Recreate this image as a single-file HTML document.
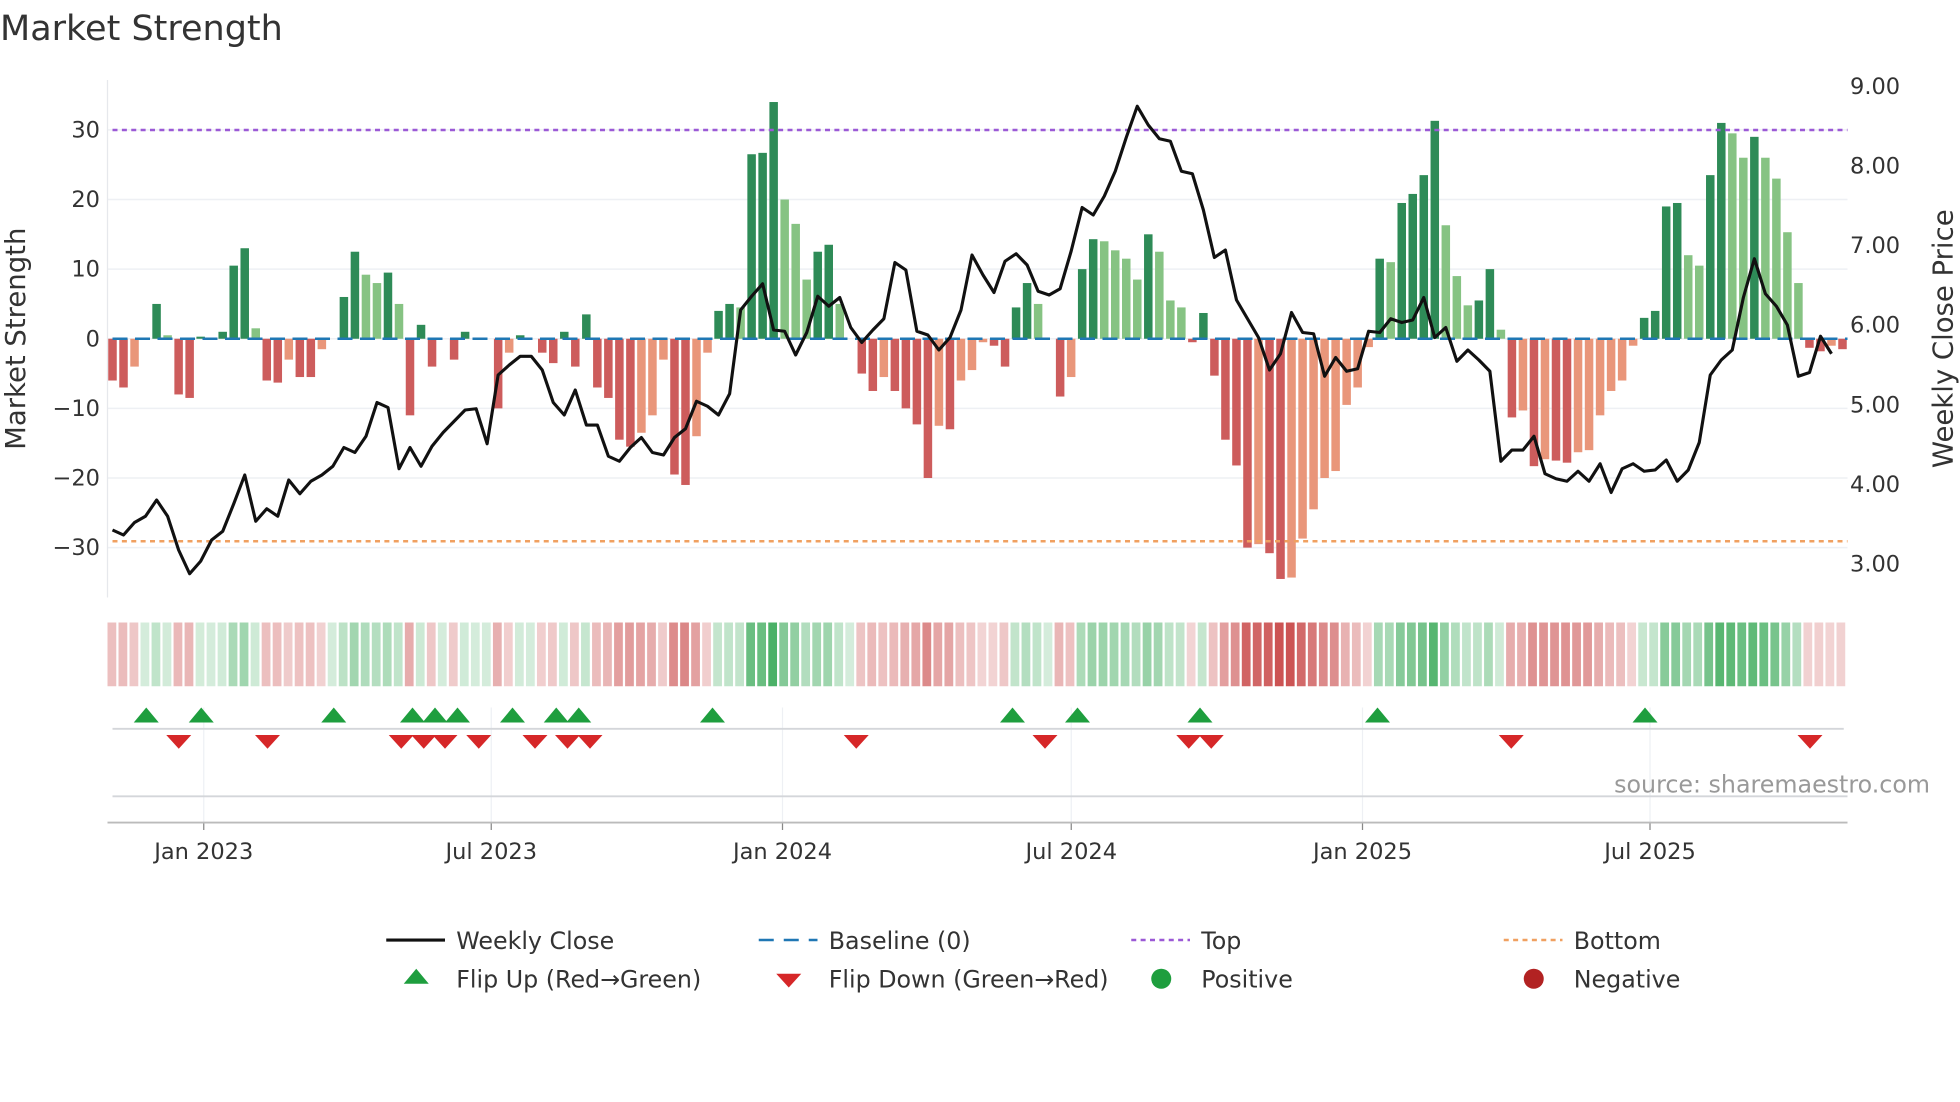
<!DOCTYPE html>
<html><head><meta charset="utf-8"><style>
html,body{margin:0;padding:0;background:#fff;}
svg{display:block;font-family:"DejaVu Sans","Liberation Sans",sans-serif;}
</style></head><body>
<svg id="s" width="1960" height="1102" viewBox="0 0 1568 881.6" xmlns="http://www.w3.org/2000/svg">
<text x="0" y="32" font-size="28" fill="#333">Market Strength</text>
<g id="g"></g>
</svg>
<script>
var V=[-6,-7,-4,0,5,0.5,-8,-8.5,0.3,0,1,10.5,13,1.5,-6,-6.3,-3,-5.5,-5.5,-1.5,0,6,12.5,9.2,8,9.5,5,-11,2,-4,0,-3,1,0,0,-10,-2,0.5,0,-2,-3.5,1,-4,3.5,-7,-8.5,-14.5,-15.5,-13.5,-11,-3,-19.5,-21,-14,-2,4,5,4.5,26.5,26.7,34,20,16.5,8.5,12.5,13.5,5,0,-5,-7.5,-5.5,-7.5,-10,-12.3,-20,-12.5,-13,-6,-4.5,-0.5,-1,-4,4.5,8,5,0,-8.3,-5.5,10,14.3,14,12.7,11.5,8.5,15,12.5,5.5,4.5,-0.5,3.7,-5.3,-14.5,-18.2,-30,-29.5,-30.8,-34.5,-34.3,-28.7,-24.5,-20,-19,-9.5,-7,-1.2,11.5,11,19.5,20.8,23.5,31.3,16.3,9,4.8,5.5,10,1.3,-11.3,-10.3,-18.3,-17.3,-17.5,-17.8,-16.3,-16,-11,-7.5,-6,-1,3,4,19,19.5,12,10.5,23.5,31,29.5,26,29,26,23,15.3,8,-1.3,-1.8,-1,-1.5];
var P=[424,428,418,413,400,413,440,459,449,432,425,403,380,417,407,413,384,395,385,380,373,358,362,349,322,326,375,358,373,357,346,337,328,327,355,300,292,285,285,296,322,332,312,340,340,365,369,358,350,362,364,350,343,321,325,332,315,248,237,227,264,265,284,266,237,245,238,262,274,264,255,210,216,265,268,280,270,248,204,220,234,209,203,212,233,236,231,201,166,172,157,137,110,85,100,111,113,137,139,168,206,200,240,255,270,296,283,250,266,267,301,286,297,295,265,266,255,258,256,238,270,262,289,280,288,297,369,360,360,349,379,383,385,377,385,371,394,375,371,377,376,368,385,376,354,300,288,280,238,207,235,245,260,301,298,269,283];
var h='';var Y0=271,K=5.57,N=V.length,dx=(1474-90)/(N-1);
function X(i){return 90+i*dx;}
// grid
[30,20,10,0,-10,-20,-30].forEach(function(v){var y=Y0-v*K;h+='<line x1="86" x2="1478" y1="'+y+'" y2="'+y+'" stroke="#eef0f4" stroke-width="1.2"/>';h+='<text x="80" y="'+(y+6)+'" font-size="18" fill="#333" text-anchor="end">'+(v<0?'\u2212'+(-v):v)+'</text>';});
['9.00','8.00','7.00','6.00','5.00','4.00','3.00'].forEach(function(t,k){var y=69+k*63.7;h+='<text x="1480" y="'+(y+6)+'" font-size="18" fill="#333">'+t+'</text>';});
h+='<line x1="86" x2="86" y1="64" y2="478" stroke="#e6e8ec"/>';
h+='<text transform="translate(20,271) rotate(-90)" font-size="22" fill="#333" text-anchor="middle">Market Strength</text>';
h+='<text transform="translate(1562,271) rotate(-90)" font-size="22" fill="#333" text-anchor="middle">Weekly Close Price</text>';
// bars
for(var i=0;i<N;i++){var v=V[i],p=i?V[i-1]:0,x=X(i)-3.4,c;
 if(v>=0)c=(v>=p)?'#2e8b57':'#86c383';else c=(v<=p)?'#cd5c5c':'#e9967a';
 var y=v>=0?Y0-v*K:Y0,hh=Math.abs(v)*K;h+='<rect x="'+x+'" y="'+y+'" width="6.8" height="'+hh+'" fill="'+c+'"/>';}
h+='<line x1="90" x2="1478" y1="'+Y0+'" y2="'+Y0+'" stroke="#1f77b4" stroke-width="2" stroke-dasharray="12,6"/>';
h+='<line x1="90" x2="1478" y1="104" y2="104" stroke="#9b59d6" stroke-width="2" stroke-dasharray="4,3.5"/>';
h+='<line x1="90" x2="1478" y1="433" y2="433" stroke="#f0a060" stroke-width="2" stroke-dasharray="4,3.5"/>';
// price
var pts=P.map(function(y,i){return X(i).toFixed(1)+','+y;}).join(' ');
h+='<polyline points="'+pts+'" fill="none" stroke="#111" stroke-width="2.5" stroke-linejoin="round"/>';
// heat strip
var cw=(1478-86)/N;
for(var i=0;i<N;i++){var v=V[i],a=Math.min(1,0.22+Math.abs(v)/34*0.7);var c=v>=0?'rgba(60,170,90,'+a+')':'rgba(200,70,70,'+a+')';
 h+='<rect x="'+(86+i*cw)+'" y="498" width="'+(cw-1.8)+'" height="51" fill="'+c+'"/>';}
// lower panels
var ticks=[[163,'Jan 2023'],[393,'Jul 2023'],[626,'Jan 2024'],[857,'Jul 2024'],[1090,'Jan 2025'],[1320,'Jul 2025']];
ticks.forEach(function(t){h+='<line x1="'+t[0]+'" x2="'+t[0]+'" y1="566" y2="658" stroke="#eef0f4"/>';h+='<line x1="'+t[0]+'" x2="'+t[0]+'" y1="658" y2="664" stroke="#888"/>';h+='<text x="'+t[0]+'" y="687" font-size="18" fill="#333" text-anchor="middle">'+t[1]+'</text>';});
h+='<line x1="90" x2="1475" y1="583" y2="583" stroke="#d4d6da" stroke-width="1.5"/>';
h+='<line x1="90" x2="1478" y1="637" y2="637" stroke="#d4d6da" stroke-width="1.5"/>';
h+='<line x1="86" x2="1478" y1="658" y2="658" stroke="#bbb" stroke-width="1.5"/>';
[117,161,267,330,348,366,410,445,463,570,810,862,960,1102,1316].forEach(function(x){h+='<polygon points="'+(x-10)+',578 '+(x+10)+',578 '+x+',566" fill="#1e9e3e"/>';});
[143,214,321,339,356,383,428,454,472,685,836,951,969,1209,1448].forEach(function(x){h+='<polygon points="'+(x-10)+',588 '+(x+10)+',588 '+x+',599" fill="#d62728"/>';});
h+='<text x="1544" y="634" font-size="19" fill="#999" text-anchor="end">source: sharemaestro.com</text>';
// legend
function lt(x,y,t){h+='<text x="'+x+'" y="'+(y+7)+'" font-size="19" fill="#333">'+t+'</text>';}
h+='<line x1="309" x2="356" y1="752" y2="752" stroke="#111" stroke-width="2.5"/>';lt(365,752,'Weekly Close');
h+='<line x1="607" x2="654" y1="752" y2="752" stroke="#1f77b4" stroke-width="2" stroke-dasharray="12,8"/>';lt(663,752,'Baseline (0)');
h+='<line x1="905" x2="952" y1="752" y2="752" stroke="#9b59d6" stroke-width="2" stroke-dasharray="4,3.5"/>';lt(961,752,'Top');
h+='<line x1="1203" x2="1250" y1="752" y2="752" stroke="#f0a060" stroke-width="2" stroke-dasharray="4,3.5"/>';lt(1259,752,'Bottom');
h+='<polygon points="323,787 343,787 333,775" fill="#1e9e3e"/>';lt(365,783,'Flip Up (Red\u2192Green)');
h+='<polygon points="621,779 641,779 631,790" fill="#d62728"/>';lt(663,783,'Flip Down (Green\u2192Red)');
h+='<circle cx="929" cy="783" r="8" fill="#1e9e3e"/>';lt(961,783,'Positive');
h+='<circle cx="1227" cy="783" r="8" fill="#b22222"/>';lt(1259,783,'Negative');
document.getElementById('g').innerHTML=h;
</script>
</body></html>
